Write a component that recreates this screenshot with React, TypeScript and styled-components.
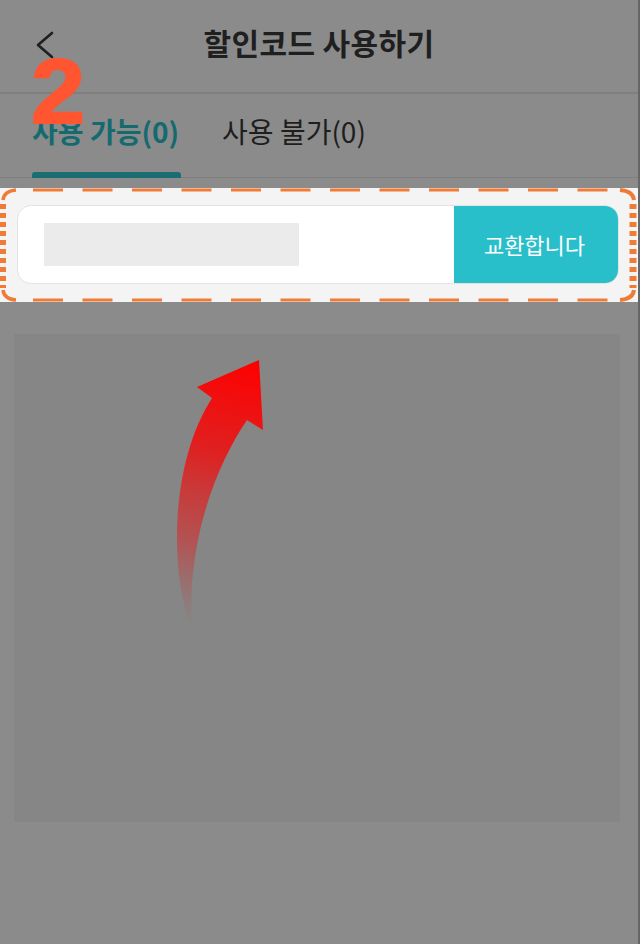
import React from "react";
import styled, { createGlobalStyle } from "styled-components";

const GlobalStyle = createGlobalStyle`
  html, body {
    margin: 0;
    padding: 0;
    background: #666666;
  }
  body {
    font-family: "Noto Sans CJK KR", "Noto Sans", sans-serif;
  }
  * { box-sizing: border-box; }
`;

const Page = styled.div`
  position: relative;
  width: 638px;
  height: 944px;
  background: #8b8b8b;
  display: flex;
  flex-direction: column;
  overflow: hidden;
`;

const Header = styled.header`
  height: 94px;
  display: flex;
  align-items: center;
  justify-content: center;
  position: relative;
  padding-bottom: 8px;
  border-bottom: 2px solid #7f7f7f;
`;

const BackButton = styled.button`
  position: absolute;
  left: 30px;
  top: 26px;
  width: 30px;
  height: 38px;
  padding: 0;
  border: none;
  background: transparent;
  display: flex;
  align-items: center;
  justify-content: center;
`;

const Title = styled.h1`
  margin: 0;
  font-size: 30px;
  font-weight: 700;
  color: #1f1f1f;
  letter-spacing: 0.4px;
`;

const TabBar = styled.nav`
  height: 84px;
  display: flex;
  gap: 43px;
  padding-left: 32px;
  border-bottom: 1px solid #7e7e7e;
`;

const Tab = styled.div<{ $active?: boolean }>`
  position: relative;
  display: flex;
  align-items: center;
  padding-bottom: 9px;
  font-size: 28px;
  font-weight: ${(p) => (p.$active ? 700 : 400)};
  color: ${(p) => (p.$active ? "#146a6f" : "#1e1e1e")};
  &::after {
    content: "";
    display: ${(p) => (p.$active ? "block" : "none")};
    position: absolute;
    left: 0;
    right: -2px;
    bottom: -1px;
    height: 6px;
    border-radius: 3px 3px 0 0;
    background: #1a6e72;
  }
`;

const Highlight = styled.section`
  position: relative;
  margin-top: 10px;
  height: 114px;
  background: #f4f4f4;
  padding: 17px 19px 18px 17px;
  display: flex;
`;

const CodeField = styled.div`
  flex: 1;
  display: flex;
  background: #ffffff;
  border: 1px solid #e3e3e3;
  border-radius: 14px;
  overflow: hidden;
`;

const InputArea = styled.div`
  flex: 1;
  display: flex;
  align-items: center;
  padding-left: 26px;
`;

const Placeholder = styled.div`
  width: 255px;
  height: 43px;
  background: #ebebeb;
`;

const ExchangeButton = styled.button`
  width: 165px;
  border: none;
  margin: -1px -1px -1px 0;
  background: #28bfcb;
  color: #ffffff;
  font-family: "Noto Sans CJK KR", "Noto Sans", sans-serif;
  font-size: 22px;
  font-weight: 400;
  border-radius: 0 14px 14px 0;
  padding: 0 4px 2px 0;
`;

const DashOverlay = styled.svg`
  position: absolute;
  left: 0;
  top: 0;
  pointer-events: none;
`;

const ListPanel = styled.div`
  margin: 32px 18px 0 14px;
  height: 488px;
  background: #868686;
`;

const StepBadge = styled.div`
  position: absolute;
  left: 31px;
  top: 47px;
  font-family: "Liberation Sans", Arial, sans-serif;
  font-weight: 700;
  font-size: 90px;
  line-height: 1;
  color: #ff5530;
  -webkit-text-stroke: 2px #ff5530;
  transform: scaleX(1.08);
  transform-origin: left top;
  pointer-events: none;
`;

const ArrowOverlay = styled.svg`
  position: absolute;
  left: 0;
  top: 0;
  pointer-events: none;
`;

function DashedFrame() {
  const orange = "#f07b36";
  return (
    <DashOverlay width="638" height="114" viewBox="0 0 638 114">
      <line x1="33" y1="2" x2="612" y2="2" stroke={orange} strokeWidth="3" strokeDasharray="30 19.5" />
      <line x1="33" y1="112" x2="612" y2="112" stroke={orange} strokeWidth="3" strokeDasharray="30 19.5" />
      <line x1="3" y1="16" x2="3" y2="100" stroke={orange} strokeWidth="6" strokeDasharray="5 4" />
      <line x1="633" y1="16" x2="633" y2="100" stroke={orange} strokeWidth="7" strokeDasharray="5 4" />
      <path d="M3 12 Q4 3 16 2" fill="none" stroke={orange} strokeWidth="3.5" />
      <path d="M3 102 Q4 111 16 112" fill="none" stroke={orange} strokeWidth="3.5" />
      <path d="M620 2 Q633 3 634 12" fill="none" stroke={orange} strokeWidth="4" />
      <path d="M620 112 Q633 111 634 102" fill="none" stroke={orange} strokeWidth="4" />
    </DashOverlay>
  );
}

function CurvedArrow() {
  return (
    <ArrowOverlay width="638" height="944" viewBox="0 0 638 944">
      <defs>
        <linearGradient id="arrowGrad" gradientUnits="userSpaceOnUse" x1="255" y1="362" x2="190" y2="625">
          <stop offset="0" stopColor="#ff0000" stopOpacity="1" />
          <stop offset="0.35" stopColor="#e51a1a" stopOpacity="0.95" />
          <stop offset="0.7" stopColor="#d03030" stopOpacity="0.6" />
          <stop offset="1" stopColor="#c04040" stopOpacity="0" />
        </linearGradient>
      </defs>
      <path
        d="M259 360 L263 430 L247 420 C218 462 186 540 192 628 C172 585 166 470 212 398 L197 387 Z"
        fill="url(#arrowGrad)"
      />
    </ArrowOverlay>
  );
}

export default function App() {
  return (
    <>
      <GlobalStyle />
      <Page>
        <Header>
          <BackButton aria-label="back">
            <svg width="30" height="38" viewBox="0 0 30 38">
              <polyline points="22,7 8,19 22,31" fill="none" stroke="#1f1f1f" strokeWidth="2.6" strokeLinecap="round" strokeLinejoin="round" />
            </svg>
          </BackButton>
          <Title>할인코드 사용하기</Title>
        </Header>
        <TabBar>
          <Tab $active>사용 가능(0)</Tab>
          <Tab>사용 불가(0)</Tab>
        </TabBar>
        <Highlight>
          <CodeField>
            <InputArea>
              <Placeholder />
            </InputArea>
            <ExchangeButton>교환합니다</ExchangeButton>
          </CodeField>
          <DashedFrame />
        </Highlight>
        <ListPanel />
        <StepBadge>2</StepBadge>
        <CurvedArrow />
      </Page>
    </>
  );
}
